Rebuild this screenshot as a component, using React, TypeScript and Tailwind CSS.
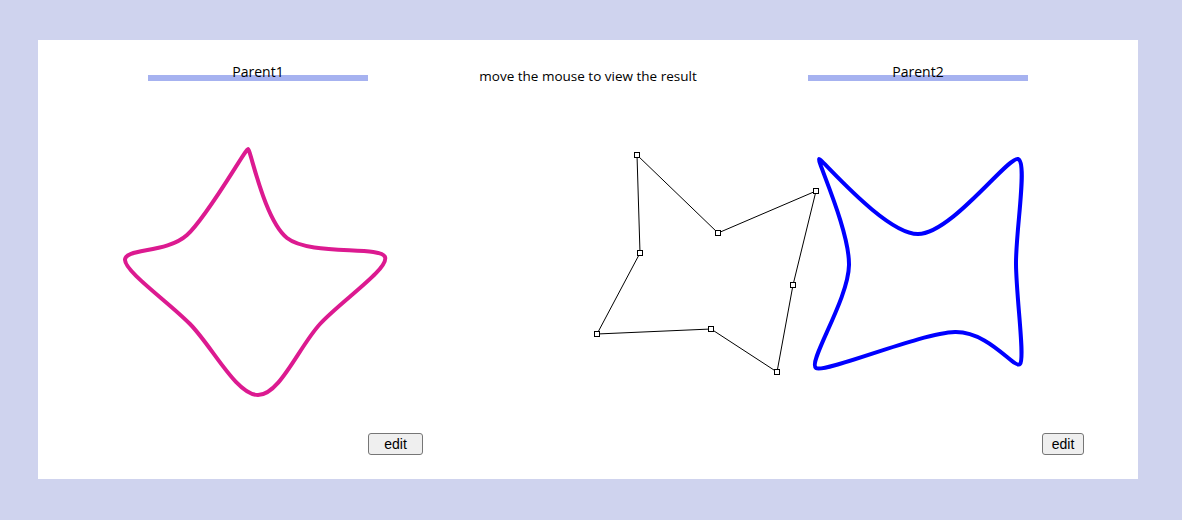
import React from "react";

type P = [number, number, number?];

function spline(pts: P[]): string {
  const n = pts.length;
  const g = (i: number) => pts[(i + n) % n];
  let d = `M${g(0)[0]},${g(0)[1]}`;
  for (let i = 0; i < n; i++) {
    const p0 = g(i - 1), p1 = g(i), p2 = g(i + 1), p3 = g(i + 2);
    const t1 = p1[2] ?? 1, t2 = p2[2] ?? 1;
    const c1x = p1[0] + ((p2[0] - p0[0]) * t1) / 6;
    const c1y = p1[1] + ((p2[1] - p0[1]) * t1) / 6;
    const c2x = p2[0] - ((p3[0] - p1[0]) * t2) / 6;
    const c2y = p2[1] - ((p3[1] - p1[1]) * t2) / 6;
    d += ` C${c1x.toFixed(1)},${c1y.toFixed(1)} ${c2x.toFixed(1)},${c2y.toFixed(1)} ${p2[0]},${p2[1]}`;
  }
  return d + " Z";
}

const magenta: P[] = [
  [248, 148, 0.15],
  [287, 237, 1],
  [385, 256, 0.8],
  [320, 323, 1],
  [258, 394, 1],
  [190, 323, 1],
  [125, 259, 0.8],
  [187, 234, 1],
];

const blue: P[] = [
  [819, 158, 0.2],
  [918, 233, 1],
  [1018, 158, 0.6],
  [1016, 263, 1],
  [1020, 363, 0.5],
  [955, 331, 1],
  [816, 367, 0.5],
  [849, 264, 1],
];

const poly: [number, number][] = [
  [637, 154],
  [718, 232],
  [816, 190],
  [793, 284],
  [777, 371],
  [711, 328],
  [597, 333],
  [640, 252],
];

function Label({ text }: { text: string }) {
  return (
    <div className="w-[220px] flex flex-col items-center">
      <div className="text-[14px] leading-[18px] text-black relative z-10">{text}</div>
      <div className="w-[220px] h-[6px] bg-[#a6b2f0] -mt-[6px]" />
    </div>
  );
}

export default function App() {
  return (
    <div
      className="w-[1182px] h-[520px] bg-[#cfd3ee] pt-[40px] pl-[38px]"
      style={{ fontFamily: '"Open Sans", "Noto Sans", sans-serif' }}
    >
      <div className="w-[1100px] h-[439px] bg-white flex flex-col">
        <div className="flex px-[110px] pt-[23px]">
          <Label text="Parent1" />
          <div className="flex-1 text-center text-[13.5px] leading-[18px] pt-[4px] text-black">
            move the mouse to view the result
          </div>
          <Label text="Parent2" />
        </div>
        <svg width={1100} height={340} className="mt-[1px] block">
          <g transform="translate(-38,-85)">
            <path d={spline(magenta)} fill="none" stroke="#dc1a90" strokeWidth={4} strokeLinejoin="round" />
            <path d={spline(blue)} fill="none" stroke="#0000ff" strokeWidth={4} strokeLinejoin="round" />
            <polygon
              points={poly.map((p) => p.join(",")).join(" ")}
              fill="none"
              stroke="#000"
              strokeWidth={1}
            />
            {poly.map((p, i) => (
              <rect key={i} x={p[0] - 2.5} y={p[1] - 2.5} width={5} height={5} fill="#fff" stroke="#000" strokeWidth={1} />
            ))}
          </g>
        </svg>
        <div className="flex items-start mt-[7px]" style={{ fontFamily: '"Liberation Sans", Arial, sans-serif' }}>
          <button className="ml-[330px] w-[55px] h-[22px] bg-[#efefef] border border-[#767676] rounded-[3px] text-[14px] leading-[20px] text-black">
            edit
          </button>
          <button className="ml-[619px] w-[42px] h-[22px] bg-[#efefef] border border-[#767676] rounded-[3px] text-[14px] leading-[20px] text-black">
            edit
          </button>
        </div>
      </div>
    </div>
  );
}
